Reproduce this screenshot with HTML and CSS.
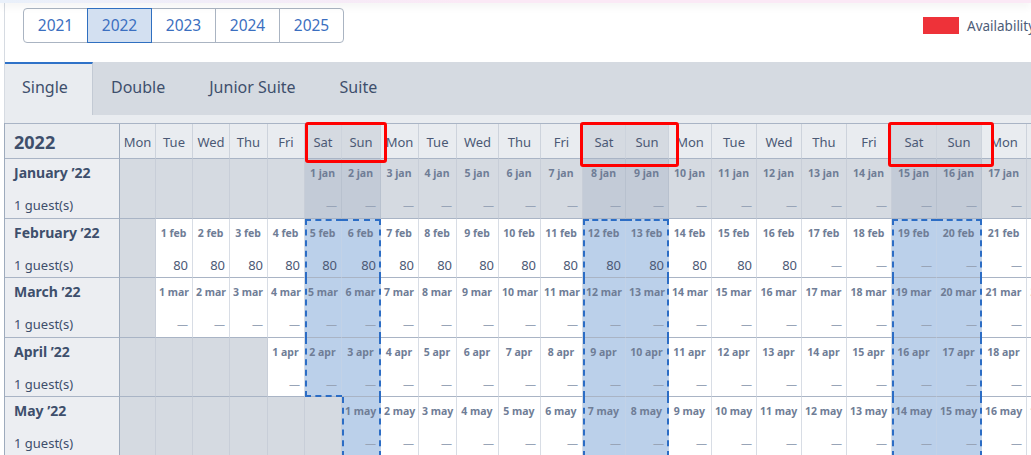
FILE: index.html
```html
<!DOCTYPE html>
<html lang="en">
<head>
<meta charset="utf-8">
<title>Availability</title>
<link rel="stylesheet" href="styles.css">
</head>
<body>
<div class="topbar"></div>
<div class="main">
  <div class="toprow">
    <div class="years">
      <div class="yr">2021</div>
      <div class="yr on">2022</div>
      <div class="yr">2023</div>
      <div class="yr">2024</div>
      <div class="yr">2025</div>
    </div>
    <div class="legend"><span class="swatch"></span><span class="ltext">Availability</span></div>
  </div>
  <div class="tabs">
    <div class="tab on">Single</div>
    <div class="tab">Double</div>
    <div class="tab">Junior Suite</div>
    <div class="tab">Suite</div>
  </div>
  <div class="panel">
    <div class="cal">
      <!-- header -->
      <div class="h y">2022</div>
      <div class="h">Mon</div><div class="h">Tue</div><div class="h">Wed</div><div class="h">Thu</div><div class="h">Fri</div>
      <div class="h w mk mk1">Sat</div><div class="h w">Sun</div>
      <div class="h">Mon</div><div class="h">Tue</div><div class="h">Wed</div><div class="h">Thu</div><div class="h">Fri</div>
      <div class="h w mk mk2">Sat</div><div class="h w">Sun</div>
      <div class="h">Mon</div><div class="h">Tue</div><div class="h">Wed</div><div class="h">Thu</div><div class="h">Fri</div>
      <div class="h w mk mk3">Sat</div><div class="h w">Sun</div>
      <div class="h">Mon</div><div class="h">Tue</div><div class="h">Wed</div>

      <!-- January -->
      <div class="m"><b>January ’22</b><span>1 guest(s)</span></div>
      <div class="c p"></div><div class="c p"></div><div class="c p"></div><div class="c p"></div><div class="c p"></div>
      <div class="c p w"><span class="d">1 jan</span><span class="v n">—</span></div>
      <div class="c p w"><span class="d">2 jan</span><span class="v n">—</span></div>
      <div class="c p"><span class="d">3 jan</span><span class="v n">—</span></div>
      <div class="c p"><span class="d">4 jan</span><span class="v n">—</span></div>
      <div class="c p"><span class="d">5 jan</span><span class="v n">—</span></div>
      <div class="c p"><span class="d">6 jan</span><span class="v n">—</span></div>
      <div class="c p"><span class="d">7 jan</span><span class="v n">—</span></div>
      <div class="c p w"><span class="d">8 jan</span><span class="v n">—</span></div>
      <div class="c p w"><span class="d">9 jan</span><span class="v n">—</span></div>
      <div class="c p"><span class="d">10 jan</span><span class="v n">—</span></div>
      <div class="c p"><span class="d">11 jan</span><span class="v n">—</span></div>
      <div class="c p"><span class="d">12 jan</span><span class="v n">—</span></div>
      <div class="c p"><span class="d">13 jan</span><span class="v n">—</span></div>
      <div class="c p"><span class="d">14 jan</span><span class="v n">—</span></div>
      <div class="c p w"><span class="d">15 jan</span><span class="v n">—</span></div>
      <div class="c p w"><span class="d">16 jan</span><span class="v n">—</span></div>
      <div class="c p"><span class="d">17 jan</span><span class="v n">—</span></div>
      <div class="c p"><span class="d">18 jan</span><span class="v n">—</span></div>
      <div class="c p"><span class="d">19 jan</span><span class="v n">—</span></div>

      <!-- February -->
      <div class="m"><b>February ’22</b><span>1 guest(s)</span></div>
      <div class="c e"></div>
      <div class="c"><span class="d">1 feb</span><span class="v">80</span></div>
      <div class="c"><span class="d">2 feb</span><span class="v">80</span></div>
      <div class="c"><span class="d">3 feb</span><span class="v">80</span></div>
      <div class="c"><span class="d">4 feb</span><span class="v">80</span></div>
      <div class="c w dl dt"><span class="d">5 feb</span><span class="v">80</span></div>
      <div class="c w dr dt"><span class="d">6 feb</span><span class="v">80</span></div>
      <div class="c"><span class="d">7 feb</span><span class="v">80</span></div>
      <div class="c"><span class="d">8 feb</span><span class="v">80</span></div>
      <div class="c"><span class="d">9 feb</span><span class="v">80</span></div>
      <div class="c"><span class="d">10 feb</span><span class="v">80</span></div>
      <div class="c"><span class="d">11 feb</span><span class="v">80</span></div>
      <div class="c w dl dt"><span class="d">12 feb</span><span class="v">80</span></div>
      <div class="c w dr dt"><span class="d">13 feb</span><span class="v">80</span></div>
      <div class="c"><span class="d">14 feb</span><span class="v">80</span></div>
      <div class="c"><span class="d">15 feb</span><span class="v">80</span></div>
      <div class="c"><span class="d">16 feb</span><span class="v">80</span></div>
      <div class="c"><span class="d">17 feb</span><span class="v n">—</span></div>
      <div class="c"><span class="d">18 feb</span><span class="v n">—</span></div>
      <div class="c w dl dt"><span class="d">19 feb</span><span class="v n">—</span></div>
      <div class="c w dr dt"><span class="d">20 feb</span><span class="v n">—</span></div>
      <div class="c"><span class="d">21 feb</span><span class="v n">—</span></div>
      <div class="c"><span class="d">22 feb</span><span class="v n">—</span></div>
      <div class="c"><span class="d">23 feb</span><span class="v n">—</span></div>

      <!-- March -->
      <div class="m"><b>March ’22</b><span>1 guest(s)</span></div>
      <div class="c e"></div>
      <div class="c"><span class="d">1 mar</span><span class="v n">—</span></div>
      <div class="c"><span class="d">2 mar</span><span class="v n">—</span></div>
      <div class="c"><span class="d">3 mar</span><span class="v n">—</span></div>
      <div class="c"><span class="d">4 mar</span><span class="v n">—</span></div>
      <div class="c w dl"><span class="d">5 mar</span><span class="v n">—</span></div>
      <div class="c w dr"><span class="d">6 mar</span><span class="v n">—</span></div>
      <div class="c"><span class="d">7 mar</span><span class="v n">—</span></div>
      <div class="c"><span class="d">8 mar</span><span class="v n">—</span></div>
      <div class="c"><span class="d">9 mar</span><span class="v n">—</span></div>
      <div class="c"><span class="d">10 mar</span><span class="v n">—</span></div>
      <div class="c"><span class="d">11 mar</span><span class="v n">—</span></div>
      <div class="c w dl"><span class="d">12 mar</span><span class="v n">—</span></div>
      <div class="c w dr"><span class="d">13 mar</span><span class="v n">—</span></div>
      <div class="c"><span class="d">14 mar</span><span class="v n">—</span></div>
      <div class="c"><span class="d">15 mar</span><span class="v n">—</span></div>
      <div class="c"><span class="d">16 mar</span><span class="v n">—</span></div>
      <div class="c"><span class="d">17 mar</span><span class="v n">—</span></div>
      <div class="c"><span class="d">18 mar</span><span class="v n">—</span></div>
      <div class="c w dl"><span class="d">19 mar</span><span class="v n">—</span></div>
      <div class="c w dr"><span class="d">20 mar</span><span class="v n">—</span></div>
      <div class="c"><span class="d">21 mar</span><span class="v n">—</span></div>
      <div class="c"><span class="d">22 mar</span><span class="v n">—</span></div>
      <div class="c"><span class="d">23 mar</span><span class="v n">—</span></div>

      <!-- April -->
      <div class="m"><b>April ’22</b><span>1 guest(s)</span></div>
      <div class="c e"></div><div class="c e"></div><div class="c e"></div><div class="c e"></div>
      <div class="c"><span class="d">1 apr</span><span class="v n">—</span></div>
      <div class="c w dl db"><span class="d">2 apr</span><span class="v n">—</span></div>
      <div class="c w dr"><span class="d">3 apr</span><span class="v n">—</span></div>
      <div class="c"><span class="d">4 apr</span><span class="v n">—</span></div>
      <div class="c"><span class="d">5 apr</span><span class="v n">—</span></div>
      <div class="c"><span class="d">6 apr</span><span class="v n">—</span></div>
      <div class="c"><span class="d">7 apr</span><span class="v n">—</span></div>
      <div class="c"><span class="d">8 apr</span><span class="v n">—</span></div>
      <div class="c w dl"><span class="d">9 apr</span><span class="v n">—</span></div>
      <div class="c w dr"><span class="d">10 apr</span><span class="v n">—</span></div>
      <div class="c"><span class="d">11 apr</span><span class="v n">—</span></div>
      <div class="c"><span class="d">12 apr</span><span class="v n">—</span></div>
      <div class="c"><span class="d">13 apr</span><span class="v n">—</span></div>
      <div class="c"><span class="d">14 apr</span><span class="v n">—</span></div>
      <div class="c"><span class="d">15 apr</span><span class="v n">—</span></div>
      <div class="c w dl"><span class="d">16 apr</span><span class="v n">—</span></div>
      <div class="c w dr"><span class="d">17 apr</span><span class="v n">—</span></div>
      <div class="c"><span class="d">18 apr</span><span class="v n">—</span></div>
      <div class="c"><span class="d">19 apr</span><span class="v n">—</span></div>
      <div class="c"><span class="d">20 apr</span><span class="v n">—</span></div>

      <!-- May -->
      <div class="m"><b>May ’22</b><span>1 guest(s)</span></div>
      <div class="c e"></div><div class="c e"></div><div class="c e"></div><div class="c e"></div><div class="c e"></div><div class="c e"></div>
      <div class="c w dl dr"><span class="d">1 may</span><span class="v n">—</span></div>
      <div class="c"><span class="d">2 may</span><span class="v n">—</span></div>
      <div class="c"><span class="d">3 may</span><span class="v n">—</span></div>
      <div class="c"><span class="d">4 may</span><span class="v n">—</span></div>
      <div class="c"><span class="d">5 may</span><span class="v n">—</span></div>
      <div class="c"><span class="d">6 may</span><span class="v n">—</span></div>
      <div class="c w dl"><span class="d">7 may</span><span class="v n">—</span></div>
      <div class="c w dr"><span class="d">8 may</span><span class="v n">—</span></div>
      <div class="c"><span class="d">9 may</span><span class="v n">—</span></div>
      <div class="c"><span class="d">10 may</span><span class="v n">—</span></div>
      <div class="c"><span class="d">11 may</span><span class="v n">—</span></div>
      <div class="c"><span class="d">12 may</span><span class="v n">—</span></div>
      <div class="c"><span class="d">13 may</span><span class="v n">—</span></div>
      <div class="c w dl"><span class="d">14 may</span><span class="v n">—</span></div>
      <div class="c w dr"><span class="d">15 may</span><span class="v n">—</span></div>
      <div class="c"><span class="d">16 may</span><span class="v n">—</span></div>
      <div class="c"><span class="d">17 may</span><span class="v n">—</span></div>
      <div class="c"><span class="d">18 may</span><span class="v n">—</span></div>
    </div>
  </div>
</div>
</body>
</html>
```
FILE: styles.css
```css
* { box-sizing: border-box; }
html, body { margin: 0; }
body {
  width: 1031px;
  height: 455px;
  overflow: hidden;
  background: #fff;
  font-family: "Noto Sans", "Open Sans", sans-serif;
  color: #3e4f6c;
}

.topbar {
  height: 3px;
  background: linear-gradient(90deg, #e9f0fa, #fbe9f6 45%, #fbe9f6);
  box-shadow: 0 2px 8px rgba(0, 0, 0, 0.12);
  position: relative;
  z-index: 1;
}

.main {
  margin-left: 4px;
  border-left: 1px solid #d6dbe2;
  width: 1120px;
}

.toprow {
  display: flex;
  align-items: center;
  height: 40px;
  padding: 5px 0 0 18px;
  margin-bottom: 19px;
}

.years { display: flex; }
.yr {
  width: 65px;
  height: 35px;
  margin-left: -1px;
  padding-bottom: 2px;
  display: flex;
  align-items: center;
  justify-content: center;
  border: 1px solid #aab4c2;
  color: #3b6fc0;
  font-size: 15.5px;
  background: #fff;
}
.yr:first-child { margin-left: 0; border-radius: 4px 0 0 4px; }
.yr:last-child { border-radius: 0 4px 4px 0; }
.yr.on {
  background: #d3e0f1;
  border-color: #2f6fc0;
  position: relative;
  z-index: 1;
}

.legend {
  display: flex;
  align-items: center;
  margin-left: 579px;
  white-space: nowrap;
}
.swatch {
  width: 36px;
  height: 17px;
  background: #ee3239;
  margin-right: 8px;
}
.ltext { font-size: 13.5px; color: #4d5c78; }

.tabs {
  display: flex;
  height: 53px;
  background: #d5dae1;
}
.tab {
  display: flex;
  align-items: center;
  padding: 0 22px 3px;
  font-size: 16px;
  color: #3e4f6c;
}
.tab.on {
  background: #e9ecf0;
  border-top: 2px solid #2f72c8;
  border-right: 1px solid #c3cad4;
  padding: 0 0 5px 17px;
  width: 88px;
}
.tab.on + .tab { padding-left: 18px; }

.panel {
  background: #e9ecf0;
  padding-top: 8px;
}

.cal {
  display: grid;
  grid-template-columns: 115px 36px 37px 37px 38px 37px 37px 39px 38px 38px 42px 42px 42px 43px 43px 43px 45px 45px 45px 45px 45px 45px 45px 45px 45px;
  grid-template-rows: 35px repeat(5, 59.5px);
  border-top: 1px solid #a9b4c5;
  box-shadow: -1px 0 0 #9eabbd;
  background: #fff;
}

.h {
  display: flex;
  align-items: center;
  justify-content: center;
  padding-top: 1px;
  font-size: 13px;
  color: #4b5975;
  background: #e9ecf0;
  border-right: 1px solid #cdd3dc;
  border-bottom: 1px solid #a9b4c5;
}
.h.w { background: #d5dae1; }
.h.y {
  justify-content: flex-start;
  padding-left: 9px;
  font-size: 18px;
  font-weight: 700;
  color: #3e4f6c;
  border-right-color: #9eabbd;
}

.mk { position: relative; }
.mk::after {
  content: "";
  position: absolute;
  border: 3px solid #ff0000;
  border-radius: 3px;
  z-index: 3;
  pointer-events: none;
}
.mk1::after { left: 0; top: -2px; width: 76px; height: 35px; }
.mk2::after { left: -3px; top: -2px; width: 93px; height: 39px; }
.mk3::after { left: -4px; top: -2px; width: 100px; height: 39px; }

.m {
  display: flex;
  flex-direction: column;
  padding: 5px 0 0 9px;
  background: #eceef2;
  border-right: 1px solid #9eabbd;
  border-bottom: 1px solid #a9b4c5;
  color: #3e4f6c;
  white-space: nowrap;
}
.m b { font-size: 14px; line-height: 18px; font-weight: 700; }
.m span { font-size: 13px; line-height: 18px; margin-top: 14px; }

.c {
  position: relative;
  display: flex;
  flex-direction: column;
  padding: 6px 4px 3.5px 3px;
  background: #fff;
  border-right: 1px solid #d8dde5;
  border-bottom: 1px solid #a9b4c5;
  white-space: nowrap;
}
.c.e, .c.p { background: #d5dae1; border-right-color: #c8ced8; }
.c.p.w { background: #c3cbd7; border-right-color: #b8c1ce; }
.c.w { background: #bbd0ea; border-right-color: #c2d2e7; }

.d {
  font-size: 10.5px;
  font-weight: 700;
  line-height: 16px;
  color: #6f7d96;
  text-align: center;
}
.v {
  margin-top: auto;
  font-size: 13px;
  line-height: 18px;
  color: #4b5975;
  text-align: right;
}
.v.n { font-size: 11px; color: #98a4b7; }

.dl::after, .dr::after, .dt::after, .db::after {
  content: "";
  position: absolute;
  top: 0;
  left: 0;
  right: -1px;
  bottom: -1px;
  border: 0 dashed #2c6dc5;
  z-index: 1;
  pointer-events: none;
}
.dl::after { border-left-width: 2px; }
.dr::after { border-right-width: 2px; }
.dt::after { border-top-width: 2px; }
.db::after { border-bottom-width: 2px; }
```
